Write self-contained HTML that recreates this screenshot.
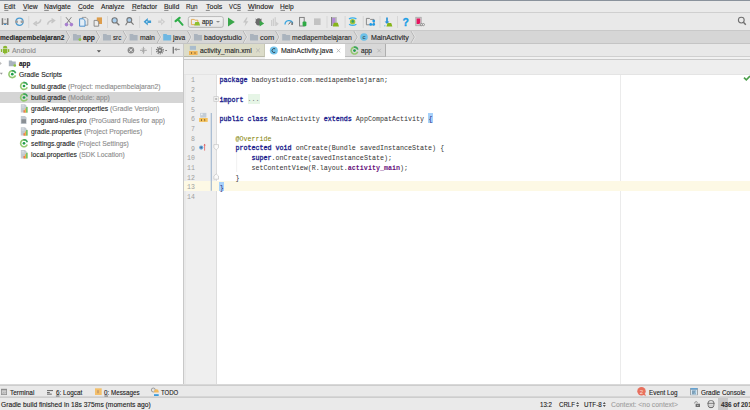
<!DOCTYPE html>
<html><head><meta charset="utf-8">
<style>
*{margin:0;padding:0;box-sizing:border-box}
html,body{width:750px;height:410px;overflow:hidden;background:#fff}
body{position:relative;font-family:"Liberation Sans",sans-serif;font-size:7.4px;color:#1b1b1b}
.a{position:absolute}
.t{position:absolute;white-space:nowrap;transform-origin:0 0;line-height:10px;-webkit-text-stroke:0.12px currentColor}
.m{position:absolute;white-space:pre;font-family:"Liberation Mono",monospace;font-size:6.7px;line-height:9.73px;color:#333333}
.num{position:absolute;left:181px;width:13.8px;text-align:right;white-space:pre;font-family:"Liberation Mono",monospace;font-size:6.5px;line-height:9.73px;color:#a0a0a0;margin-top:0.1px}
.k{color:#20208c;font-weight:normal;-webkit-text-stroke:0.3px #20208c}
.an{color:#808000}
.fld{color:#660e7a;font-weight:bold}
.fold{background:#e6f5e6;color:#777;padding:1.4px 0 0}
.br{background:#a6d1fb;color:#2a2a7a;padding:1.8px 0.3px 0}
#ov{position:absolute;left:0;top:0}
</style></head><body>
<div class="a" style="left:0px;top:0px;width:750px;height:1px;background:#8a929c;"></div>
<div class="a" style="left:0px;top:1px;width:750px;height:11px;background:#eaeaea;"></div>
<div class="a" style="left:0px;top:12px;width:750px;height:1px;background:#cfcfcf;"></div>
<div class="a" style="left:0px;top:13px;width:750px;height:17px;background:#e9e9e9;"></div>
<div class="a" style="left:0px;top:30px;width:750px;height:1px;background:#c9c9c9;"></div>
<div class="a" style="left:0px;top:31px;width:750px;height:12px;background:#d6d6d6;"></div>
<div class="a" style="left:0px;top:43px;width:750px;height:1px;background:#c4c4c4;"></div>
<div class="a" style="left:0px;top:44px;width:183px;height:13px;background:#e8e8e8;"></div>
<div class="a" style="left:0px;top:56px;width:183px;height:1px;background:#c8c8c8;"></div>
<div class="a" style="left:0px;top:57px;width:183px;height:327px;background:#ffffff;"></div>
<div class="a" style="left:183px;top:44px;width:1px;height:340px;background:#c8c8c8;"></div>
<div class="a" style="left:0px;top:92px;width:183px;height:11px;background:#d5d5d5;"></div>
<div class="a" style="left:184px;top:44px;width:566px;height:12px;background:#e8e8e8;"></div>
<div class="a" style="left:184px;top:56px;width:566px;height:1px;background:#cfcfcf;"></div>
<div class="a" style="left:184px;top:57px;width:566px;height:2px;background:#f1f1f1;"></div>
<div class="a" style="left:184px;top:59px;width:566px;height:1px;background:#c9c9c9;"></div>
<div class="a" style="left:184px;top:60px;width:566px;height:14px;background:#eeeeee;"></div>
<div class="a" style="left:184px;top:74px;width:566px;height:1px;background:#e4e4e4;"></div>
<div class="a" style="left:184px;top:75px;width:33px;height:309px;background:#efefef;"></div>
<div class="a" style="left:184px;top:75px;width:2px;height:309px;background:#e9e9e9;"></div>
<div class="a" style="left:216px;top:75px;width:1px;height:309px;background:#dddddd;"></div>
<div class="a" style="left:620px;top:75px;width:1px;height:309px;background:#ebebeb;"></div>
<div class="a" style="left:184px;top:181px;width:566px;height:10px;background:#fdf9e5;"></div>
<div class="a" style="left:0px;top:384px;width:750px;height:1px;background:#d8d8d8;"></div>
<div class="a" style="left:0px;top:385px;width:750px;height:1px;background:#cdcdcd;"></div>
<div class="a" style="left:0px;top:386px;width:750px;height:10px;background:#e9e9e9;"></div>
<div class="a" style="left:0px;top:396px;width:750px;height:1px;background:#d6d6d6;"></div>
<div class="a" style="left:0px;top:397px;width:750px;height:1px;background:#cdcdcd;"></div>
<div class="a" style="left:0px;top:398px;width:750px;height:12px;background:#eaeaea;"></div>
<div class="a" style="left:151.4px;top:46.5px;width:1px;height:8px;background:#cdcdcd;"></div>
<div class="a" style="left:184px;top:44px;width:81px;height:13px;background:#dcdcc9;border-bottom:1px solid #b9b9a8;border-right:1px solid #c8c8b4"></div>
<div class="a" style="left:265px;top:44px;width:80px;height:15px;background:#ffffff;"></div>
<div class="a" style="left:345px;top:44px;width:41px;height:13px;background:#d8d8d8;border-bottom:1px solid #bcbcbc;border-right:1px solid #aeaeae"></div>
<div class="a" style="left:718.3px;top:398px;width:31.7px;height:12px;background:#e2e2e2;"></div>
<div class="a" style="left:718.3px;top:398px;width:9.4px;height:12px;background:#c8c8c8;"></div>
<div class="a" style="left:740px;top:398px;width:10px;height:12px;background:#ebebeb;"></div>
<svg id="ov" width="750" height="410" viewBox="0 0 750 410">
<rect x="4.30" y="9.9" width="4.07" height="0.8" fill="#6a6a6a"/>
<rect x="22.90" y="9.9" width="4.23" height="0.8" fill="#6a6a6a"/>
<rect x="44.20" y="9.9" width="4.59" height="0.8" fill="#6a6a6a"/>
<rect x="78.10" y="9.9" width="4.53" height="0.8" fill="#6a6a6a"/>
<rect x="131.70" y="9.9" width="4.53" height="0.8" fill="#6a6a6a"/>
<rect x="164.20" y="9.9" width="4.26" height="0.8" fill="#6a6a6a"/>
<rect x="191.17" y="9.9" width="3.22" height="0.8" fill="#6a6a6a"/>
<rect x="205.80" y="9.9" width="3.99" height="0.8" fill="#6a6a6a"/>
<rect x="237.11" y="9.9" width="3.59" height="0.8" fill="#6a6a6a"/>
<rect x="247.70" y="9.9" width="6.41" height="0.8" fill="#6a6a6a"/>
<rect x="280.50" y="9.9" width="4.51" height="0.8" fill="#6a6a6a"/>
<path d="M66.2 31 L69.60000000000001 37 L66.2 43" fill="none" stroke="#a9a9a9" stroke-width="0.8"/>
<path d="M67.10000000000001 31 L70.5 37 L67.10000000000001 43" fill="none" stroke="#ececec" stroke-width="0.6"/>
<path d="M96.2 31 L99.60000000000001 37 L96.2 43" fill="none" stroke="#a9a9a9" stroke-width="0.8"/>
<path d="M97.10000000000001 31 L100.5 37 L97.10000000000001 43" fill="none" stroke="#ececec" stroke-width="0.6"/>
<path d="M123.2 31 L126.60000000000001 37 L123.2 43" fill="none" stroke="#a9a9a9" stroke-width="0.8"/>
<path d="M124.10000000000001 31 L127.5 37 L124.10000000000001 43" fill="none" stroke="#ececec" stroke-width="0.6"/>
<path d="M157.2 31 L160.6 37 L157.2 43" fill="none" stroke="#a9a9a9" stroke-width="0.8"/>
<path d="M158.1 31 L161.5 37 L158.1 43" fill="none" stroke="#ececec" stroke-width="0.6"/>
<path d="M187.6 31 L191.0 37 L187.6 43" fill="none" stroke="#a9a9a9" stroke-width="0.8"/>
<path d="M188.5 31 L191.9 37 L188.5 43" fill="none" stroke="#ececec" stroke-width="0.6"/>
<path d="M243.2 31 L246.6 37 L243.2 43" fill="none" stroke="#a9a9a9" stroke-width="0.8"/>
<path d="M244.1 31 L247.5 37 L244.1 43" fill="none" stroke="#ececec" stroke-width="0.6"/>
<path d="M275.6 31 L279.0 37 L275.6 43" fill="none" stroke="#a9a9a9" stroke-width="0.8"/>
<path d="M276.5 31 L279.90000000000003 37 L276.5 43" fill="none" stroke="#ececec" stroke-width="0.6"/>
<path d="M353.9 31 L357.29999999999995 37 L353.9 43" fill="none" stroke="#a9a9a9" stroke-width="0.8"/>
<path d="M354.79999999999995 31 L358.2 37 L354.79999999999995 43" fill="none" stroke="#ececec" stroke-width="0.6"/>
<path d="M411 31 L414.4 37 L411 43" fill="none" stroke="#a9a9a9" stroke-width="0.8"/>
<path d="M411.9 31 L415.3 37 L411.9 43" fill="none" stroke="#ececec" stroke-width="0.6"/>
<path d="M73 34 h3.2 l1 1 h3.8 v5.4 h-8 z" fill="#aab3bd"/>
<path d="M103 34 h3.2 l1 1 h3.8 v5.4 h-8 z" fill="#aab3bd"/>
<path d="M129.6 34 h3.2 l1 1 h3.8 v5.4 h-8 z" fill="#aab3bd"/>
<path d="M163.2 34 h3.2 l1 1 h3.8 v5.4 h-8 z" fill="#6fb7e2"/>
<path d="M194 34 h3.2 l1 1 h3.8 v5.4 h-8 z" fill="#aab3bd"/>
<path d="M250 34 h3.2 l1 1 h3.8 v5.4 h-8 z" fill="#aab3bd"/>
<path d="M282.2 34 h3.2 l1 1 h3.8 v5.4 h-8 z" fill="#aab3bd"/>
<circle cx="79.9" cy="39.6" r="1.4" fill="#8ec63f"/>
<circle cx="364" cy="37" r="3.8" fill="#6cc0e8"/><text x="364" y="39.3" font-size="6" text-anchor="middle" fill="#333" font-family="Liberation Sans">c</text>
<path d="M96.8 50.2 h4.2 l-2.1 2.4 z" fill="#555"/>
<path d="M2.9 48.2 a2.25 2.4 0 0 1 4.5 0 z" fill="#8ab72f"/><path d="M2.9 48.7 h4.5 v4.4 h-1.2 v1.2 h-0.7 v-1.2 h-0.7 v1.2 h-0.7 v-1.2 h-1.2 z" fill="#8ab72f"/><rect x="0.9" y="49" width="1.3" height="3" rx="0.6" fill="#8ab72f"/><rect x="8" y="49" width="1.3" height="3" rx="0.6" fill="#8ab72f"/>
<circle cx="130.9" cy="50.2" r="3.3" fill="#8c8c8c"/><path d="M129.3 48.6 l3.2 3.2 M132.5 48.6 l-3.2 3.2" stroke="#e8e8e8" stroke-width="1"/>
<path d="M143.4 46.8 v7 M140 50.3 h6.8" stroke="#a6a6a6" stroke-width="1"/><path d="M142 48.4 l1.4 1.4 l1.4 -1.4 M142 52.2 l1.4 -1.4 l1.4 1.4" fill="none" stroke="#a6a6a6" stroke-width="0.9"/>
<circle cx="159.9" cy="50.4" r="2.6" fill="#7a7a7a"/><circle cx="159.9" cy="50.4" r="3.4" fill="none" stroke="#7a7a7a" stroke-width="1.3" stroke-dasharray="1.1 1.05"/><circle cx="159.9" cy="50.4" r="0.9" fill="#e8e8e8"/><path d="M165.2 50.5 h1.8" stroke="#7a7a7a" stroke-width="0.9"/>
<rect x="172.6" y="46.8" width="1.4" height="6.8" fill="#7a7a7a"/><path d="M175 49.4 h4.8 M176.6 47.9 l-1.5 1.5 l1.5 1.5" fill="none" stroke="#7a7a7a" stroke-width="0.8"/>
<path d="M0 61.8 l1.8 1.6 l-1.8 1.6 z" fill="#bdbdbd"/>
<path d="M-0.2 72.8 l3 0 l-1.5 2 z" fill="#9a9a9a"/>
<path d="M8.8 60.6 h2.8000000000000003 l1 1 h3.2 v4.6 h-7 z" fill="#aab3bd"/>
<circle cx="14.8" cy="65.5" r="1.3" fill="#8ec63f"/>
<path d="M15.5 75.4 A3.4 3.4 0 1 1 13.9 71.2" fill="none" stroke="#93c86f" stroke-width="1.6"/><path d="M11.700000000000001 70.8 A3.4 3.4 0 0 1 15.600000000000001 73.2" fill="none" stroke="#3aa55a" stroke-width="1.6"/><circle cx="12.3" cy="74.2" r="1.35" fill="#1f9e48"/>
<path d="M27.2 87.2 A3.4 3.4 0 1 1 25.6 83" fill="none" stroke="#93c86f" stroke-width="1.6"/><path d="M23.4 82.6 A3.4 3.4 0 0 1 27.3 85" fill="none" stroke="#3aa55a" stroke-width="1.6"/><circle cx="24" cy="86" r="1.35" fill="#1f9e48"/>
<path d="M27.2 98.7 A3.4 3.4 0 1 1 25.6 94.5" fill="none" stroke="#93c86f" stroke-width="1.6"/><path d="M23.4 94.1 A3.4 3.4 0 0 1 27.3 96.5" fill="none" stroke="#3aa55a" stroke-width="1.6"/><circle cx="24" cy="97.5" r="1.35" fill="#1f9e48"/>
<path d="M20.8 104.2 h4.2 l1.6 1.6 v6.8 h-5.8 z" fill="#c3cad1"/><path d="M21.6 105.7 h2.5 M21.6 107.10000000000001 h3" stroke="#e6eaee" stroke-width="0.6"/><rect x="23.6" y="110.2" width="1.1" height="2.5" fill="#ef5a28"/><rect x="24.9" y="108.5" width="1.1" height="4.2" fill="#f7b040"/><rect x="26.2" y="106.9" width="1.4" height="5.8" fill="#62b94f"/>
<path d="M20.8 115.9 h4.2 l1.6 1.6 v6.6 h-5.8 z" fill="#c3cad1"/><rect x="21.4" y="119.2" width="4.6" height="4" fill="#8a8f94"/>
<path d="M20.8 127.2 h4.2 l1.6 1.6 v6.8 h-5.8 z" fill="#c3cad1"/><path d="M21.6 128.70000000000002 h2.5 M21.6 130.1 h3" stroke="#e6eaee" stroke-width="0.6"/><rect x="23.6" y="133.20000000000002" width="1.1" height="2.5" fill="#ef5a28"/><rect x="24.9" y="131.5" width="1.1" height="4.2" fill="#f7b040"/><rect x="26.2" y="129.9" width="1.4" height="5.8" fill="#62b94f"/>
<path d="M27.2 144.5 A3.4 3.4 0 1 1 25.6 140.3" fill="none" stroke="#93c86f" stroke-width="1.6"/><path d="M23.4 139.9 A3.4 3.4 0 0 1 27.3 142.3" fill="none" stroke="#3aa55a" stroke-width="1.6"/><circle cx="24" cy="143.3" r="1.35" fill="#1f9e48"/>
<path d="M20.8 150.0 h4.2 l1.6 1.6 v6.8 h-5.8 z" fill="#c3cad1"/><path d="M21.6 151.5 h2.5 M21.6 152.89999999999998 h3" stroke="#e6eaee" stroke-width="0.6"/><rect x="23.6" y="156.0" width="1.1" height="2.5" fill="#ef5a28"/><rect x="24.9" y="154.29999999999998" width="1.1" height="4.2" fill="#f7b040"/><rect x="26.2" y="152.7" width="1.4" height="5.8" fill="#62b94f"/>
<rect x="189.8" y="45.9" width="6.2" height="3.9" fill="#a9bccc"/><rect x="189" y="51" width="8.6" height="4" fill="#f2b757"/><path d="M191 53 l1 -1 M191 53 l1 1 M194.5 52 l1 1 l-1 1" stroke="#5a4a2a" stroke-width="0.6" fill="none"/>
<path d="M256.2 48.6 l3.6 3.6 M259.8 48.6 l-3.6 3.6" stroke="#b0b0b0" stroke-width="0.8"/>
<circle cx="273.8" cy="50.6" r="4" fill="#72c3ea"/><path d="M275.2 48.9 a2 2 0 1 0 0 3.3" fill="none" stroke="#2c3a45" stroke-width="0.9"/>
<path d="M336.7 48.8 l3.6 3.6 M340.3 48.8 l-3.6 3.6" stroke="#b0b0b0" stroke-width="0.8"/>
<path d="M357.7 51.800000000000004 A3.4 3.4 0 1 1 356.1 47.6" fill="none" stroke="#93c86f" stroke-width="1.6"/><path d="M353.9 47.2 A3.4 3.4 0 0 1 357.8 49.6" fill="none" stroke="#3aa55a" stroke-width="1.6"/><circle cx="354.5" cy="50.6" r="1.35" fill="#1f9e48"/>
<path d="M377.3 48.8 l3.6 3.6 M380.9 48.8 l-3.6 3.6" stroke="#b0b0b0" stroke-width="0.8"/>
<path d="M744 77.6 l2.3 2.3 l3.7 -3.8" fill="none" stroke="#4a9e4a" stroke-width="1.6"/>
<rect x="210.7" y="113" width="1.2" height="77.8" fill="#a3b9d1"/>
<rect x="200.2" y="112.9" width="6.2" height="4.7" fill="#c2ccd6"/><rect x="201" y="113.6" width="1.6" height="1.6" fill="#eef1f4"/><rect x="199.1" y="118" width="8.6" height="3.9" fill="#f5c15a"/><path d="M202 119.2 l-1 0.9 l1 0.9 M204.2 119.2 l1 0.9 l-1 0.9" stroke="#5a4520" stroke-width="0.7" fill="none"/>
<circle cx="201.2" cy="147.6" r="2.1" fill="#6aa8dc"/><circle cx="201.2" cy="147.6" r="1" fill="#3f6f9f"/><path d="M204.6 150.6 v-6.4" stroke="#e06060" stroke-width="0.8"/><path d="M203.5 145.4 l1.1 -1.6 l1.1 1.6 z" fill="#e06060"/>
<path d="M213.9 144.6 h4.6 v3.2 l-2.3 2.1 l-2.3 -2.1 z" fill="#fafafa" stroke="#c4c4c4" stroke-width="0.7" stroke-linejoin="miter"/>
<path d="M213.9 179.2 h4.6 v-3.2 l-2.3 -2.1 l-2.3 2.1 z" fill="#fafafa" stroke="#c4c4c4" stroke-width="0.7" stroke-linejoin="miter"/>
<rect x="213.9" y="96.7" width="4.4" height="4.6" fill="#fafafa" stroke="#c4c4c4" stroke-width="0.7"/><path d="M214.9 99 h2.4 M216.1 97.8 v2.4" stroke="#888" stroke-width="0.6"/>
<rect x="236.5" y="153" width="0.6" height="19" fill="#e8e8e8"/>
<rect x="1" y="388.8" width="6" height="6.2" fill="#8c8c8c"/><rect x="1.7" y="390.2" width="4.6" height="4.1" fill="#cdcdcd"/><path d="M2.4 393.6 l1.5 -1.4 M4 393.6 l1.6 -1.6" stroke="#9a9a9a" stroke-width="0.6"/>
<rect x="47" y="390" width="6" height="1.1" fill="#6e6e6e"/><rect x="47" y="392" width="2.8" height="1.1" fill="#6e6e6e"/><rect x="47" y="393.6" width="4.8" height="1.1" fill="#6e6e6e"/>
<rect x="55.9" y="395.6" width="3.6" height="0.8" fill="#555"/>
<rect x="95" y="388.3" width="6.7" height="6.7" fill="#f3bf6a"/><rect x="97.2" y="390.2" width="1.6" height="3" fill="#c49a6a"/>
<rect x="104.4" y="395.6" width="3.6" height="0.8" fill="#555"/>
<circle cx="153.3" cy="390" r="2" fill="#e4e4e4" stroke="#8a8a8a" stroke-width="0.8"/><path d="M154.1 391.4 a2.3 2.1 0 0 1 4.6 0 v1.2 h-4.6 z" fill="#f2b95c"/><rect x="154" y="394.2" width="4.7" height="1.8" fill="#3b9ad9"/>
<circle cx="641.5" cy="391.3" r="4.2" fill="#e8705d"/><path d="M643.2 394.6 l2.6 1.6 l-0.8 -2.8 z" fill="#e8705d"/><text x="641.5" y="393.5" font-size="6" text-anchor="middle" fill="#fbe3de" font-family="Liberation Sans">2</text>
<rect x="690.2" y="388" width="7.6" height="7.2" fill="#8d949a"/><rect x="690.6" y="388.2" width="6.8" height="1.4" fill="#5aa6e0"/><rect x="691" y="389.8" width="6" height="5" fill="#d8e6f0"/><rect x="692" y="390.4" width="4" height="4" fill="#7fa0b8"/><path d="M694.6 394.4 l1.4 -3.6" stroke="#a8d4f0" stroke-width="0.8"/>
<path d="M576.0999999999999 404 l1.5 -2 l1.5 2 z M576.0999999999999 405 l1.5 2 l1.5 -2 z" fill="#555"/>
<path d="M602.8 404 l1.5 -2 l1.5 2 z M602.8 405 l1.5 2 l1.5 -2 z" fill="#555"/>
<path d="M694.5 403.4 a1.7 1.7 0 0 1 3.1 -0.9" fill="none" stroke="#6e6e6e" stroke-width="0.8"/><rect x="695.6" y="403.7" width="4.4" height="3.3" fill="#6e6e6e"/><rect x="697.2" y="404.9" width="1.2" height="1" fill="#cfcfcf"/>
<rect x="708.1" y="400.6" width="5.8" height="7" rx="2.4" fill="none" stroke="#6a6a6a" stroke-width="0.9"/><path d="M707.4 403.3 h7.2" stroke="#6a6a6a" stroke-width="0.9"/><path d="M709.6 405.2 h0.8 M711.6 405.2 h0.8" stroke="#6a6a6a" stroke-width="0.8"/><path d="M709.2 407.4 h3.6" stroke="#6a6a6a" stroke-width="1"/>
<rect x="1.7" y="18.2" width="1.5" height="6.8" fill="#7c7c7c"/><rect x="6.9" y="18.2" width="1.6" height="6.8" fill="#7c7c7c"/><rect x="4.5" y="18.6" width="1.1" height="1.6" fill="#a0a0a0"/><rect x="3.2" y="22.9" width="3.7" height="1.1" fill="#8c8c8c"/><rect x="4.1" y="23.9" width="2.1" height="1.1" fill="#3d8fd1"/>
<circle cx="19.5" cy="21.7" r="3.6" fill="none" stroke="#4a9ad0" stroke-width="1.3" stroke-dasharray="10.5 0.8"/><rect x="15" y="20.5" width="3" height="2.5" rx="0.9" fill="#a0a0a0"/><rect x="20.6" y="20.5" width="3.1" height="2.5" rx="0.9" fill="#a0a0a0"/>
<rect x="28.4" y="16" width="0.8" height="12" fill="#d2d2d2"/>
<rect x="60.5" y="16" width="0.8" height="12" fill="#d2d2d2"/>
<rect x="107" y="16" width="0.8" height="12" fill="#d2d2d2"/>
<rect x="139.3" y="16" width="0.8" height="12" fill="#d2d2d2"/>
<rect x="171.1" y="16" width="0.8" height="12" fill="#d2d2d2"/>
<rect x="326.6" y="16" width="0.8" height="12" fill="#d2d2d2"/>
<rect x="344.7" y="16" width="0.8" height="12" fill="#d2d2d2"/>
<rect x="362.8" y="16" width="0.8" height="12" fill="#d2d2d2"/>
<rect x="379.6" y="16" width="0.8" height="12" fill="#d2d2d2"/>
<rect x="397.2" y="16" width="0.8" height="12" fill="#d2d2d2"/>
<path d="M40.8 19.4 q-0.5 4 -5 4.2 M36.8 21.4 l-2.8 2.2 l3 2" fill="none" stroke="#c6c6c6" stroke-width="1.5"/>
<path d="M47.5 24.6 q1 -4 5.5 -4 M51.5 18.6 l3 2 l-3 2.4" fill="none" stroke="#c6c6c6" stroke-width="1.5"/>
<path d="M66 17.2 l4.8 6.2 M71.4 17.2 l-4.8 6.2" stroke="#777" stroke-width="0.9"/><circle cx="66.5" cy="24.6" r="1.8" fill="#a77fcf"/><circle cx="71.4" cy="24.6" r="1.8" fill="#a77fcf"/>
<path d="M82.2 17.4 h3.8 l1.8 1.8 v6 h-5.6 z" fill="#e8e8e8" stroke="#8a8a8a" stroke-width="0.8"/><path d="M79.6 18.8 h3.6 l1.8 1.8 v5.6 h-5.4 z" fill="#e3eef7" stroke="#3d88c9" stroke-width="0.9"/>
<rect x="96.8" y="17.4" width="5.2" height="6.6" fill="#dd9d4c"/><path d="M94.1 20.4 h3 l1.6 1.6 v4.2 h-4.6 z" fill="#ececec" stroke="#777" stroke-width="0.8"/>
<circle cx="114.6" cy="20.4" r="2.6" fill="#a9cfee" stroke="#777" stroke-width="1.1"/><path d="M116.5 22.4 l2.8 2.8" stroke="#777" stroke-width="1.4"/>
<circle cx="129.3" cy="20" r="2.4" fill="#a9cfee" stroke="#777" stroke-width="1.1"/><path d="M131 22 l2.6 2.6 M127.6 22 l-2 3.2" stroke="#777" stroke-width="1.1"/>
<path d="M143.6 21.8 l4.2 -3.8 v2.5 h3.3 v2.6 h-3.3 v2.5 z" fill="#3f9bd2"/><rect x="146.2" y="21" width="1.2" height="1.6" fill="#cfe6f4"/>
<path d="M165.2 21.8 l-4.2 -3.8 v2.5 h-2.9 v2.6 h2.9 v2.5 z" fill="#d0d0d0"/><rect x="161.6" y="21" width="1.2" height="1.6" fill="#ececec"/>
<path d="M175.6 21.2 L179.6 17.8" stroke="#2fae4a" stroke-width="2.2" stroke-linecap="round"/><path d="M178.2 19.8 L182.6 24.8" stroke="#2fae4a" stroke-width="1.9" stroke-linecap="round"/>
<defs><linearGradient id="cg" x1="0" y1="0" x2="0" y2="1"><stop offset="0" stop-color="#f4f4f4"/><stop offset="1" stop-color="#e2e2e2"/></linearGradient></defs><rect x="188.3" y="16.6" width="35" height="10.8" rx="2" fill="url(#cg)" stroke="#ababab" stroke-width="0.8"/>
<path d="M191.4 19.4 h2.8 l0.8 0.8 h2.8 v4.4 h-6.4 z" fill="none" stroke="#e3a74c" stroke-width="0.9"/><path d="M194.2 25.4 L195.3 21.9 h3.7 l1.1 3.5 z" fill="#8cbf2e"/>
<path d="M215.9 20.9 h4.2 l-2.1 1.9 z" fill="#8a8a8a"/>
<path d="M228 17.6 l6.8 4.4 l-6.8 4.4 z" fill="#3aa64a"/>
<path d="M246.4 17.6 L243 22.4 h2.5 L244.6 26.4 L248.4 21.2 h-2.4 L247.6 17.6 z" fill="#c6c6c6"/>
<ellipse cx="258.6" cy="21.8" rx="3" ry="3.6" fill="#6a6a6a"/><path d="M255.4 19 l1.4 1 M261.8 19 l-1.4 1 M255.2 22.4 h1.4 M260.6 22.4 h1.6" stroke="#6a6a6a" stroke-width="0.8"/><path d="M259.6 20.6 l4.6 3 l-4.6 3 z" fill="#3aa64a"/>
<rect x="271" y="20" width="1.2" height="6" fill="#cdcdcd"/><rect x="272.8" y="18.6" width="1.2" height="7.4" fill="#cdcdcd"/><rect x="274.6" y="17.2" width="1.2" height="8.8" fill="#cdcdcd"/><path d="M275.8 21.4 l3 2.4 l-3 2.4 z" fill="#cdcdcd"/>
<path d="M285 24.6 a4 4 0 0 1 7.8 -1.2" fill="none" stroke="#3aa6e0" stroke-width="1.3"/><path d="M288.6 24.4 l2.4 -3" stroke="#666" stroke-width="1"/><rect x="291.4" y="22.4" width="1.4" height="2.6" fill="#666"/>
<rect x="299.6" y="17.4" width="4.6" height="8.6" fill="none" stroke="#777" stroke-width="0.9"/><rect x="302.6" y="21.6" width="3.8" height="4.6" rx="1" fill="#2eaa45"/>
<rect x="314" y="18.4" width="6.6" height="6.6" fill="#c2c2c2"/>
<rect x="331" y="17" width="5.8" height="9" fill="#b8b8b8"/><rect x="331.1" y="17" width="0.9" height="9" fill="#7a7a7a"/><rect x="332.2" y="18" width="3" height="5.6" fill="#b48ad8"/><path d="M332.8 26.4 L333.8 22.8 h4 l1.2 3.6 z" fill="#86b51a"/>
<circle cx="352.6" cy="21.7" r="2.7" fill="#a3c43c"/><circle cx="352.8" cy="21.4" r="1.3" fill="#2fa06a"/><path d="M349 18.9 q3.7 -2.2 7.4 0 M349 24.3 q3.7 2.2 7.4 0" fill="none" stroke="#3ab2ea" stroke-width="1.3"/>
<path d="M366.4 18.4 h3 l1 1 h3.6 v5.4 h-7.6 z" fill="none" stroke="#7e7e7e" stroke-width="0.9"/><circle cx="370.7" cy="24.4" r="1.35" fill="#1f9ce8"/><circle cx="373.7" cy="24.4" r="1.35" fill="#1f9ce8"/><circle cx="373.7" cy="21.1" r="1.35" fill="#1f9ce8"/>
<path d="M387 17.6 v4.6" stroke="#2a94d8" stroke-width="1.7"/><path d="M384.6 21.6 h4.8 l-2.4 2.4 z" fill="#2a94d8"/><path d="M386.4 26.4 L387.6 23 h3.6 l1.2 3.4 z" fill="#86b51a"/><rect x="384.2" y="25.2" width="1.2" height="1.2" fill="#6cbbe8"/>
<text x="405.8" y="25.8" font-size="10.4" font-weight="bold" text-anchor="middle" fill="#1a9ee6" stroke="#1a9ee6" stroke-width="0.35" font-family="Liberation Sans">?</text>
<rect x="415.8" y="17.2" width="5.4" height="8.6" fill="#d0d0d0" stroke="#9a9a9a" stroke-width="0.6"/><path d="M416.6 18.6 h3.6 v4.6 l-1.4 0.9 h-2.2 z" fill="#e5155f"/><circle cx="421.4" cy="24.6" r="1.1" fill="#eee" stroke="#666" stroke-width="0.6"/><circle cx="423.4" cy="24.6" r="1.1" fill="#eee" stroke="#666" stroke-width="0.6"/>
<circle cx="741.3" cy="20.1" r="2.9" fill="none" stroke="#707070" stroke-width="1.1"/><path d="M743.4 22.3 l2.4 2.4" stroke="#707070" stroke-width="1.5"/>
</svg>
<span class="t" style="left:4.1px;top:2.44px;transform:scaleX(0.886);color:#1b1b1b;font-size:7.4px;">Edit</span>
<span class="t" style="left:22.7px;top:2.44px;transform:scaleX(0.918);color:#1b1b1b;font-size:7.4px;">View</span>
<span class="t" style="left:44px;top:2.44px;transform:scaleX(0.914);color:#1b1b1b;font-size:7.4px;">Navigate</span>
<span class="t" style="left:77.9px;top:2.44px;transform:scaleX(0.904);color:#1b1b1b;font-size:7.4px;">Code</span>
<span class="t" style="left:101.3px;top:2.44px;transform:scaleX(0.893);color:#1b1b1b;font-size:7.4px;">Analyze</span>
<span class="t" style="left:131.5px;top:2.44px;transform:scaleX(0.905);color:#1b1b1b;font-size:7.4px;">Refactor</span>
<span class="t" style="left:164px;top:2.44px;transform:scaleX(0.924);color:#1b1b1b;font-size:7.4px;">Build</span>
<span class="t" style="left:186.4px;top:2.44px;transform:scaleX(0.855);color:#1b1b1b;font-size:7.4px;">Run</span>
<span class="t" style="left:205.6px;top:2.44px;transform:scaleX(0.949);color:#1b1b1b;font-size:7.4px;">Tools</span>
<span class="t" style="left:228.8px;top:2.44px;transform:scaleX(0.789);color:#1b1b1b;font-size:7.4px;">VCS</span>
<span class="t" style="left:247.5px;top:2.44px;transform:scaleX(0.961);color:#1b1b1b;font-size:7.4px;">Window</span>
<span class="t" style="left:280.3px;top:2.44px;transform:scaleX(0.900);color:#1b1b1b;font-size:7.4px;">Help</span>
<span class="t" style="left:0px;top:32.74px;transform:scaleX(0.880);color:#1e1e1e;font-size:7.4px;font-weight:bold;">mediapembelajaran2</span>
<span class="t" style="left:83px;top:32.74px;transform:scaleX(0.912);color:#1e1e1e;font-size:7.4px;font-weight:bold;">app</span>
<span class="t" style="left:113px;top:32.74px;transform:scaleX(0.841);color:#1e1e1e;font-size:7.4px;">src</span>
<span class="t" style="left:140.3px;top:32.74px;transform:scaleX(0.929);color:#1e1e1e;font-size:7.4px;">main</span>
<span class="t" style="left:173.3px;top:32.74px;transform:scaleX(0.906);color:#1e1e1e;font-size:7.4px;">java</span>
<span class="t" style="left:204.1px;top:32.74px;transform:scaleX(0.950);color:#1e1e1e;font-size:7.4px;">badoystudio</span>
<span class="t" style="left:259.7px;top:32.74px;transform:scaleX(1.016);color:#1e1e1e;font-size:7.4px;">com</span>
<span class="t" style="left:292.4px;top:32.74px;transform:scaleX(0.920);color:#1e1e1e;font-size:7.4px;">mediapembelajaran</span>
<span class="t" style="left:370.5px;top:32.74px;transform:scaleX(0.958);color:#1e1e1e;font-size:7.4px;">MainActivity</span>
<span class="t" style="left:12.2px;top:46.44px;transform:scaleX(0.933);color:#8a8a8a;font-size:7.4px;">Android</span>
<span class="t" style="left:18.8px;top:59.34px;transform:scaleX(0.867);color:#111;font-size:7.4px;font-weight:bold;">app</span>
<span class="t" style="left:18.8px;top:70.14px;transform:scaleX(0.917);color:#1b1b1b;font-size:7.4px;">Gradle Scripts</span>
<span class="t" style="left:30.7px;top:81.54px;transform:scaleX(0.915);color:#1b1b1b;font-size:7.4px;">build.gradle</span>
<span class="t" style="left:67.90607px;top:81.54px;transform:scaleX(0.915);color:#8c8c8c;font-size:7.4px;">(Project: mediapembelajaran2)</span>
<span class="t" style="left:30.7px;top:93.04px;transform:scaleX(0.915);color:#1b1b1b;font-size:7.4px;">build.gradle</span>
<span class="t" style="left:67.90607px;top:93.04px;transform:scaleX(0.915);color:#8c8c8c;font-size:7.4px;">(Module: app)</span>
<span class="t" style="left:30.7px;top:104.44px;transform:scaleX(0.915);color:#1b1b1b;font-size:7.4px;">gradle-wrapper.properties</span>
<span class="t" style="left:110.04919718750001px;top:104.44px;transform:scaleX(0.915);color:#8c8c8c;font-size:7.4px;">(Gradle Version)</span>
<span class="t" style="left:30.7px;top:115.94px;transform:scaleX(0.915);color:#1b1b1b;font-size:7.4px;">proguard-rules.pro</span>
<span class="t" style="left:88.59676484375001px;top:115.94px;transform:scaleX(0.915);color:#8c8c8c;font-size:7.4px;">(ProGuard Rules for app)</span>
<span class="t" style="left:30.7px;top:127.44px;transform:scaleX(0.915);color:#1b1b1b;font-size:7.4px;">gradle.properties</span>
<span class="t" style="left:83.70789125px;top:127.44px;transform:scaleX(0.915);color:#8c8c8c;font-size:7.4px;">(Project Properties)</span>
<span class="t" style="left:30.7px;top:138.84px;transform:scaleX(0.915);color:#1b1b1b;font-size:7.4px;">settings.gradle</span>
<span class="t" style="left:76.93477531250001px;top:138.84px;transform:scaleX(0.915);color:#8c8c8c;font-size:7.4px;">(Project Settings)</span>
<span class="t" style="left:30.7px;top:150.24px;transform:scaleX(0.915);color:#1b1b1b;font-size:7.4px;">local.properties</span>
<span class="t" style="left:78.81266984375px;top:150.24px;transform:scaleX(0.915);color:#8c8c8c;font-size:7.4px;">(SDK Location)</span>
<span class="t" style="left:200px;top:45.54px;transform:scaleX(0.920);color:#1e1e1e;font-size:7.4px;">activity_main.xml</span>
<span class="t" style="left:280.6px;top:45.54px;transform:scaleX(0.951);color:#1e1e1e;font-size:7.4px;">MainActivity.java</span>
<span class="t" style="left:361px;top:45.54px;transform:scaleX(0.891);color:#1e1e1e;font-size:7.4px;">app</span>
<div class="num" style="top:76.30px">1</div>
<div class="m" style="left:219.4px;top:76.30px"><b class="k">package</b> badoystudio.com.mediapembelajaran;</div>
<div class="num" style="top:86.03px">2</div>
<div class="num" style="top:95.76px">3</div>
<div class="m" style="left:219.4px;top:95.76px"><b class="k">import</b> <span class="fold">...</span></div>
<div class="num" style="top:105.49px">5</div>
<div class="num" style="top:115.22px">6</div>
<div class="m" style="left:219.4px;top:115.22px"><b class="k">public class</b> MainActivity <b class="k">extends</b> AppCompatActivity <span class="br">{</span></div>
<div class="num" style="top:124.95px">7</div>
<div class="num" style="top:134.68px">8</div>
<div class="m" style="left:219.4px;top:134.68px">    <span class="an">@Override</span></div>
<div class="num" style="top:144.41px">9</div>
<div class="m" style="left:219.4px;top:144.41px">    <b class="k">protected void</b> onCreate(Bundle savedInstanceState) {</div>
<div class="num" style="top:154.14px">10</div>
<div class="m" style="left:219.4px;top:154.14px">        <b class="k">super</b>.onCreate(savedInstanceState);</div>
<div class="num" style="top:163.87px">11</div>
<div class="m" style="left:219.4px;top:163.87px">        setContentView(R.layout.<span class="fld">activity_main</span>);</div>
<div class="num" style="top:173.60px">12</div>
<div class="m" style="left:219.4px;top:173.60px">    }</div>
<div class="num" style="top:183.33px">13</div>
<div class="m" style="left:219.4px;top:183.33px"><span class="br">}</span></div>
<div class="num" style="top:193.06px">14</div>
<span class="t" style="left:9.6px;top:388.24px;transform:scaleX(0.873);color:#1b1b1b;font-size:7.4px;">Terminal</span>
<span class="t" style="left:55.7px;top:388.24px;transform:scaleX(0.864);color:#1b1b1b;font-size:7.4px;">6: Logcat</span>
<span class="t" style="left:104.2px;top:388.24px;transform:scaleX(0.851);color:#1b1b1b;font-size:7.4px;">0: Messages</span>
<span class="t" style="left:161.4px;top:388.24px;transform:scaleX(0.814);color:#1b1b1b;font-size:7.4px;">TODO</span>
<span class="t" style="left:648.6px;top:388.24px;transform:scaleX(0.858);color:#1b1b1b;font-size:7.4px;">Event Log</span>
<span class="t" style="left:700.6px;top:388.24px;transform:scaleX(0.864);color:#1b1b1b;font-size:7.4px;">Gradle Console</span>
<span class="t" style="left:1px;top:399.64px;transform:scaleX(0.906);color:#1b1b1b;font-size:7.4px;">Gradle build finished in 18s 375ms (moments ago)</span>
<span class="t" style="left:540.4px;top:399.64px;transform:scaleX(0.833);color:#1b1b1b;font-size:7.4px;">13:2</span>
<span class="t" style="left:559px;top:399.64px;transform:scaleX(0.828);color:#1b1b1b;font-size:7.4px;">CRLF</span>
<span class="t" style="left:584.3px;top:399.64px;transform:scaleX(0.844);color:#1b1b1b;font-size:7.4px;">UTF-8</span>
<span class="t" style="left:611px;top:399.64px;transform:scaleX(0.925);color:#a0a0a0;font-size:7.4px;">Context: &lt;no context&gt;</span>
<span class="t" style="left:721.1px;top:399.64px;transform:scaleX(0.858);color:#333;font-size:7.4px;font-weight:bold;">436 of 201M</span>
<span class="t" style="left:202px;top:17.44px;transform:scaleX(0.875);color:#202020;font-size:7.4px;">app</span>
</body></html>
